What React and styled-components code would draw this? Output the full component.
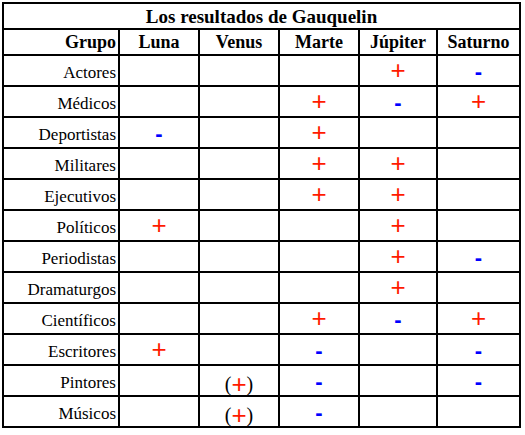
import React from "react"
import styled, { createGlobalStyle } from "styled-components"

const GlobalStyle = createGlobalStyle`
  html, body {
    margin: 0;
    padding: 0;
    background: #fff;
  }
  body {
    font-family: "Liberation Serif", "Times New Roman", serif;
    color: #000;
  }
`

const columns = ["Luna", "Venus", "Marte", "Júpiter", "Saturno"]
const widths = [116, 80, 80, 80, 78, 83]

// p = plus, m = minus, b = bracketed plus
const rows = [
  ["Actores", "", "", "", "p", "m"],
  ["Médicos", "", "", "p", "m", "p"],
  ["Deportistas", "m", "", "p", "", ""],
  ["Militares", "", "", "p", "p", ""],
  ["Ejecutivos", "", "", "p", "p", ""],
  ["Políticos", "p", "", "", "p", ""],
  ["Periodistas", "", "", "", "p", "m"],
  ["Dramaturgos", "", "", "", "p", ""],
  ["Científicos", "", "", "p", "m", "p"],
  ["Escritores", "p", "", "m", "", "m"],
  ["Pintores", "", "b", "m", "", "m"],
  ["Músicos", "", "b", "m", "", ""],
]

const Page = styled.div`
  padding: 2px 0 0 2px;
`

const Table = styled.table`
  border-collapse: collapse;
  table-layout: fixed;
  width: ${widths.reduce((a, b) => a + b, 0)}px;
  font-family: "Liberation Serif", "Times New Roman", serif;
`

const Cell = styled.td`
  border: 2px solid #000;
  padding: ${p => (p.$head ? "0 2px" : "3px 2px 0")};
  height: ${p => (p.$head ? 24 : 26)}px;
  font-family: "Liberation Serif", "Times New Roman", serif;
  font-size: ${p => (p.$head ? 18 : 17)}px;
  font-weight: ${p => (p.$head ? "bold" : "normal")};
  text-align: ${p => (p.$right ? "right" : "center")};
  vertical-align: middle;
  white-space: nowrap;
  line-height: 1;
  color: #000;
`

const Title = styled(Cell).attrs({ as: "th" })`
  font-size: 19px;
  font-weight: bold;
`

const Plus = styled.span`
  display: inline-block;
  font-family: "Liberation Sans", Arial, sans-serif;
  font-size: 26px;
  color: #ff1a00;
  line-height: 20px;
  height: 20px;
  vertical-align: top;
  position: relative;
  top: ${p => (p.$inner ? 0 : -2)}px;
`

const Minus = styled.span`
  font-family: "Liberation Sans", Arial, sans-serif;
  font-size: 22px;
  font-weight: bold;
  color: #0000ff;
  line-height: 1;
`

const Paren = styled.span`
  display: inline-block;
  font-size: 20px;
  line-height: 20px;
  position: relative;
  top: 2px;
`

const Mark = ({ kind }) => {
  if (kind === "p") return <Plus>+</Plus>
  if (kind === "m") return <Minus>-</Minus>
  if (kind === "b")
    return (
      <Paren>
        (<Plus $inner>+</Plus>)
      </Paren>
    )
  return null
}

export default function App() {
  return (
    <Page>
      <GlobalStyle />
      <Table>
        <colgroup>
          {widths.map((w, i) => (
            <col key={i} style={{ width: w }} />
          ))}
        </colgroup>
        <thead>
          <tr>
            <Title colSpan={6} $head>
              Los resultados de Gauquelin
            </Title>
          </tr>
          <tr>
            <Cell $head $right>
              Grupo
            </Cell>
            {columns.map(c => (
              <Cell key={c} $head>
                {c}
              </Cell>
            ))}
          </tr>
        </thead>
        <tbody>
          {rows.map(([label, ...marks]) => (
            <tr key={label}>
              <Cell $right>{label}</Cell>
              {marks.map((m, i) => (
                <Cell key={i}>
                  <Mark kind={m} />
                </Cell>
              ))}
            </tr>
          ))}
        </tbody>
      </Table>
    </Page>
  )
}
